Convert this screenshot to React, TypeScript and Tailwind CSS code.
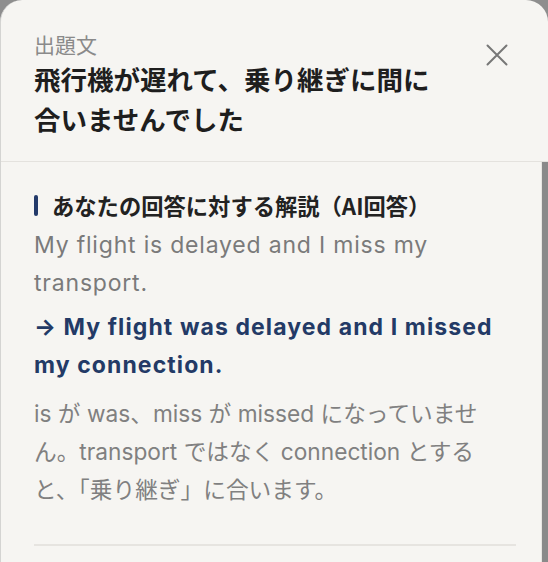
import React from 'react';

// 出題文の解説シート

const jp = { fontFamily: '"Noto Sans CJK JP", "Noto Sans", sans-serif' };
const en = { fontFamily: 'Inter, "Noto Sans CJK JP", sans-serif' };

export default function App() {
  return (
    <div className="w-[548px] h-[562px] bg-[#8e8e8e] overflow-hidden" style={jp}>
      <div className="h-full rounded-t-[22px] bg-[#f6f5f2] flex flex-col border-l border-[#d4d4d2]">
        {/* Header */}
        <div className="relative h-[162px] shrink-0 border-b border-[#e4e2de] px-[33px] pt-[32px]">
          <p className="text-[21px] leading-[24px] text-[#8a8a8a]">出題文</p>
          <h2 className="mt-[3px] text-[26.5px] leading-[40px] font-bold text-[#1e1e1e]">
            飛行機が遅れて、乗り継ぎに間に
            <br />
            合いませんでした
          </h2>
          <button className="absolute right-[40px] top-[44px] w-[22px] h-[22px] text-[#777]">
            <svg viewBox="0 0 22 22" width="22" height="22" fill="none" stroke="currentColor" strokeWidth="2" strokeLinecap="round">
              <path d="M1.5 1.5 L20.5 20.5 M20.5 1.5 L1.5 20.5" />
            </svg>
          </button>
        </div>

        {/* Body */}
        <div className="flex-1 flex min-h-0">
          <div className="flex-1 px-[33px] pt-[29px] border-r border-[#e8e6e2]">
            <div className="flex items-center gap-[14px]">
              <span className="w-[4px] h-[21px] rounded-full bg-[#233a6a]" />
              <h3 className="text-[22.3px] leading-[28px] font-bold text-[#222]">
                あなたの回答に対する解説（AI回答）
              </h3>
            </div>

            <div style={en}>
              <p className="mt-[7px] text-[23px] leading-[38px] tracking-[0.8px] text-[#7a7a7a]">
                My flight is delayed and I miss my
                <br />
                transport.
              </p>

              <p className="mt-[6px] text-[23px] leading-[38px] tracking-[1.1px] font-bold text-[#233a66]">
                → My flight was delayed and I missed
                <br />
                my connection.
              </p>

              <p className="mt-[11px] text-[22.7px] leading-[38px] text-[#808080]">
                is が was、miss が missed になっていませ
                <br />
                ん。transport ではなく connection とする
                <br />
                と、「乗り継ぎ」に合います。
              </p>
            </div>

            <div className="mt-[35px] h-[2px] bg-[#e6e4e0] mr-[-8px]" />
          </div>
          <div className="w-[6px] bg-[#8a8a8a]" />
        </div>
      </div>
    </div>
  );
}
